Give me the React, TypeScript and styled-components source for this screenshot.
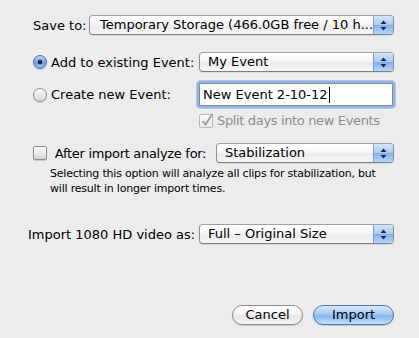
import styled, { createGlobalStyle } from 'styled-components';

const GlobalStyle = createGlobalStyle`
  html, body {
    margin: 0;
    padding: 0;
    background: #ececec;
  }
  body {
    font-family: "DejaVu Sans", "Liberation Sans", sans-serif;
    font-size: 13px;
    color: #000;
  }
`;

const Dialog = styled.div`
  width: 419px;
  height: 338px;
  box-sizing: border-box;
  padding: 15px 25px 0 33px;
  display: flex;
  flex-direction: column;
  background: #ececec;
`;

const Row = styled.div<{ $top?: number; $indent?: number }>`
  display: flex;
  align-items: center;
  margin-top: ${p => p.$top ?? 0}px;
  margin-left: ${p => p.$indent ?? 0}px;
`;

const FormGrid = styled.div`
  display: grid;
  grid-template-columns: 166px 1fr;
  grid-auto-rows: auto;
  align-items: center;
  margin-top: 17px;
`;

const Cell = styled.div<{ $top?: number; $col?: number }>`
  display: flex;
  align-items: center;
  margin-top: ${p => p.$top ?? 0}px;
  ${p => (p.$col ? `grid-column: ${p.$col};` : '')}
`;

const Label = styled.span<{ $width?: number; $disabled?: boolean; $tight?: number }>`
  white-space: nowrap;
  color: ${p => (p.$disabled ? '#8c8c8c' : '#000')};
  letter-spacing: ${p => p.$tight ?? 0}px;
  ${p => (p.$width ? `width: ${p.$width}px; flex: none;` : '')}
`;

const Choice = styled.label`
  display: flex;
  align-items: center;
  gap: 4px;
  white-space: nowrap;
`;

const Radio = styled.span<{ $on?: boolean }>`
  width: 14px;
  height: 14px;
  box-sizing: border-box;
  border-radius: 50%;
  flex: none;
  border: 1px solid ${p => (p.$on ? '#4a6d9c' : '#8d8d8d')};
  background: ${p =>
    p.$on
      ? 'radial-gradient(circle at 50% 50%, #1b2c45 0 2px, transparent 2.6px), linear-gradient(#bcd5f3, #6d9fdc 55%, #8fbcf0)'
      : 'linear-gradient(#fdfdfd, #e8e8e8 55%, #d8d8d8)'};
  box-shadow: 0 1px 1px rgba(0, 0, 0, 0.15);
`;

const Checkbox = styled.span<{ $disabled?: boolean }>`
  position: relative;
  width: 14px;
  height: 14px;
  box-sizing: border-box;
  flex: none;
  border-radius: 2px;
  border: 1px solid ${p => (p.$disabled ? '#b9b9b9' : '#8d8d8d')};
  background: ${p =>
    p.$disabled ? 'linear-gradient(#f8f8f8, #ececec)' : 'linear-gradient(#fdfdfd, #e8e8e8 55%, #d8d8d8)'};
  box-shadow: ${p => (p.$disabled ? 'none' : '0 1px 1px rgba(0, 0, 0, 0.15)')};

  svg {
    position: absolute;
    left: 0px;
    top: -3px;
  }
`;

const Popup = styled.div<{ $width?: number }>`
  display: flex;
  height: 20px;
  box-sizing: border-box;
  flex: ${p => (p.$width ? 'none' : '1')};
  width: ${p => (p.$width ? `${p.$width}px` : 'auto')};
  border: 1px solid #8f8f8f;
  border-top-color: #a0a0a0;
  border-bottom-color: #7e7e7e;
  border-radius: 4px;
  overflow: hidden;
  background: linear-gradient(#ffffff, #f6f6f6 45%, #ebebeb 55%, #f7f7f7);
  box-shadow: 0 1px 1px rgba(0, 0, 0, 0.08);
`;

const PopupText = styled.span<{ $pad?: number }>`
  flex: 1;
  padding-left: ${p => p.$pad ?? 8}px;
  line-height: 18px;
  white-space: nowrap;
  overflow: hidden;
`;

const Stepper = styled.span`
  width: 19px;
  flex: none;
  display: flex;
  align-items: center;
  justify-content: center;
  border-left: 1px solid #7d9cc6;
  background: linear-gradient(#d3e5fa, #a9cbf2 48%, #7fb0ec 52%, #b6d7fb);
`;

const TextField = styled.div`
  flex: 1;
  height: 23px;
  box-sizing: border-box;
  border: 1px solid #8a8a8a;
  border-radius: 2px;
  background: #fff;
  box-shadow: 0 0 0 2px #8fb4e3, 0 0 0 3px rgba(120, 160, 215, 0.5);
  display: flex;
  align-items: center;
  padding-left: 3px;
  margin: 0 1px 0 0;
`;

const Caret = styled.span`
  display: inline-block;
  width: 1px;
  height: 16px;
  background: #000;
  margin-left: 1px;
`;

const Note = styled.p`
  margin: 3px 0 0 17px;
  font-size: 11px;
  line-height: 15px;
  letter-spacing: -0.2px;
`;

const Buttons = styled.div`
  margin-top: auto;
  margin-bottom: 13px;
  display: flex;
  justify-content: flex-end;
  gap: 10px;
`;

const PushButton = styled.button<{ $primary?: boolean }>`
  height: 20px;
  box-sizing: border-box;
  border-radius: 10px;
  font-family: inherit;
  font-size: 13px;
  line-height: 18px;
  padding: 0;
  color: #000;
  width: ${p => (p.$primary ? 81 : 71)}px;
  border: 1px solid ${p => (p.$primary ? '#56739e' : '#8a8a8a')};
  background: ${p =>
    p.$primary
      ? 'linear-gradient(#d5e8fb, #a8cbf3 45%, #85b6ee 55%, #c4e2fd)'
      : 'linear-gradient(#ffffff, #f4f4f4 45%, #e6e6e6 55%, #f7f7f7)'};
  box-shadow: 0 1px 1px rgba(0, 0, 0, 0.15);
`;

function Arrows() {
  return (
    <svg width="7" height="11" viewBox="0 0 7 11">
      <path d="M3.5 0.5 L6.5 4 H0.5 Z" fill="#1d2c44" />
      <path d="M3.5 10.5 L6.5 7 H0.5 Z" fill="#1d2c44" />
    </svg>
  );
}

function PopupButton({ value, width, pad }: { value: string; width?: number; pad?: number }) {
  return (
    <Popup $width={width}>
      <PopupText $pad={pad}>{value}</PopupText>
      <Stepper>
        <Arrows />
      </Stepper>
    </Popup>
  );
}

export default function App() {
  return (
    <>
      <GlobalStyle />
      <Dialog>
        <Row>
          <Label $width={56}>Save to:</Label>
          <PopupButton value="Temporary Storage (466.0GB free / 10 h..." pad={10} />
        </Row>

        <FormGrid>
          <Choice>
            <Radio $on />
            Add to existing Event:
          </Choice>
          <PopupButton value="My Event" />

          <Cell $top={11}>
            <Choice>
              <Radio />
              Create new Event:
            </Choice>
          </Cell>
          <Cell $top={11}>
            <TextField>
              New Event 2-10-12
              <Caret />
            </TextField>
          </Cell>

          <Cell $top={7} $col={2}>
            <Choice>
              <Checkbox $disabled>
                <svg width="15" height="15" viewBox="0 0 15 15">
                  <path d="M2.5 9 L5.5 12.5 L12.5 2" fill="none" stroke="#9a9a9a" strokeWidth="1.8" />
                </svg>
              </Checkbox>
              <Label $disabled $tight={-0.35}>Split days into new Events</Label>
            </Choice>
          </Cell>
        </FormGrid>

        <Row $top={15}>
          <Choice>
            <Checkbox />
            <Label $width={165} $tight={-0.3}>&nbsp;After import analyze for:</Label>
          </Choice>
          <PopupButton value="Stabilization" />
        </Row>
        <Note>
          Selecting this option will analyze all clips for stabilization, but
          <br />
          will result in longer import times.
        </Note>

        <Row $top={28} $indent={-5}>
          <Label $width={171}>Import 1080 HD video as:</Label>
          <PopupButton value="Full – Original Size" />
        </Row>

        <Buttons>
          <PushButton>Cancel</PushButton>
          <PushButton $primary>Import</PushButton>
        </Buttons>
      </Dialog>
    </>
  );
}
